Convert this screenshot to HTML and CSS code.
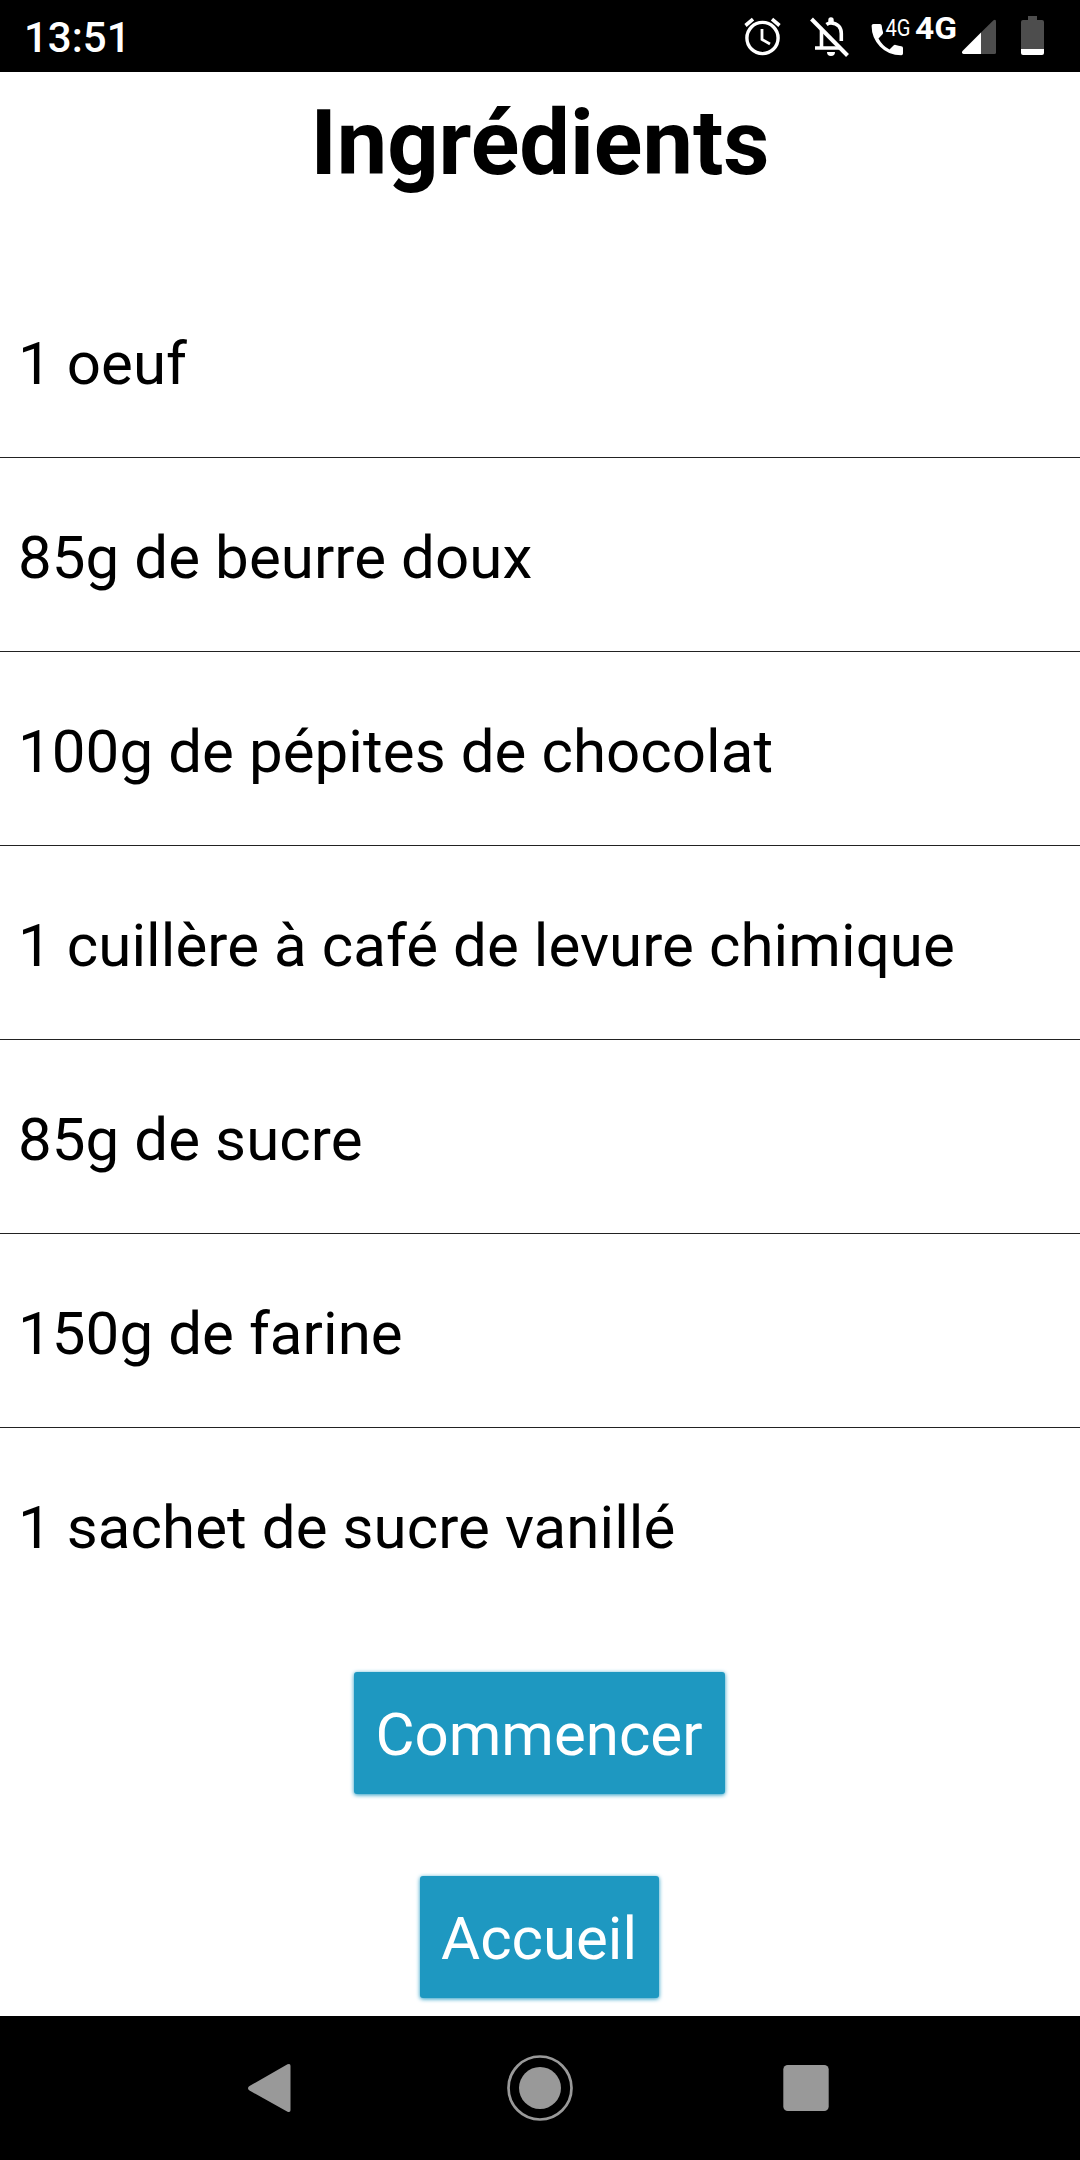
FILE: index.html
```
<!DOCTYPE html>
<html lang="fr">
<head>
    <meta charset="UTF-8">
    <meta name="viewport" content="width=device-width, initial-scale=1.0">
    <title>Ingrédients</title>
    <link rel="stylesheet" href="styles.css">
</head>
<body>
    <header class="status-bar">
        <span class="clock">13:51</span>
        <svg class="status-icons" viewBox="740 0 310 72">
            <!-- alarm -->
            <g fill="none" stroke="#fff">
                <circle cx="762.5" cy="38" r="15.6" stroke-width="3.4"/>
                <path d="M762 29v10.5l8 4.5" stroke-width="2.8"/>
                <path d="M745.5 25.5l7.5-6.3M779.5 25.500l-7.500-6.300" stroke-width="3.6"/>
            </g>
            <!-- bell off -->
            <g fill="none" stroke="#fff" stroke-width="3.6">
                <path d="M821.500 30v17.500M815 48h24M826.500 24.500q2-1.500 4.500-1.500c7 0 10.300 5 10.300 10.500v7.500"/>
                <path d="M811.500 19l36 36.500" stroke-width="4"/>
            </g>
            <path d="M828.300 23v-3a2.700 2.700 0 0 1 5.400 0v3zM827 52h8a4 4 0 0 1-8 0z" fill="#fff"/>
            <!-- phone -->
            <path d="M873.500 24h6.500q1.500 0 1.700 1.500 0.200 3.500 1.300 6.500 0.400 1.200-0.500 2.200l-4 4.200q3.800 7.200 11 11.200l4-4.200q1-0.900 2.200-0.500 3 1 5.600 1.300 1.700 0.200 1.700 1.800v5.500q0 1.700-1.700 1.700-13 0-21.400-8.800-8.300-8.700-8.300-20.700 0-1.700 1.900-1.700z" fill="#fff"/>
            <text class="call-type" x="885.500" y="36" textLength="25" lengthAdjust="spacingAndGlyphs">4G</text>
            <text class="data-type" x="915" y="39" textLength="42" lengthAdjust="spacingAndGlyphs">4G</text>
            <!-- signal -->
            <path d="M981 32.500l12.500-12.200q2.500-1.300 2.500 1.200v31q0 1.500-1.500 1.500h-13.500z" fill="#4d4d4d"/>
            <path d="M981 32.500v21.500h-17.500q-2.500-0.700-1-3z" fill="#fff"/>
            <!-- battery -->
            <path d="M1021 49v-27q0-2 2-2h5v-4h9v4h5q2 0 2 2v27z" fill="#4d4d4d"/>
            <path d="M1021 49h23v4q0 2-2 2h-19q-2 0-2-2z" fill="#fff"/>
        </svg>
    </header>

    <main>
        <h1>Ingrédients</h1>
        <ul class="ingredients">
            <li>1 oeuf</li>
            <li>85g de beurre doux</li>
            <li>100g de pépites de chocolat</li>
            <li>1 cuillère à café de levure chimique</li>
            <li>85g de sucre</li>
            <li>150g de farine</li>
            <li>1 sachet de sucre vanillé</li>
        </ul>
        <div class="actions">
            <button>Commencer</button>
            <button>Accueil</button>
        </div>
    </main>

    <nav class="nav-bar">
        <svg viewBox="0 0 72 72">
            <path d="M49.500 12.300L11.500 34q-3 2 0 4.500L49.500 59.700q3 1 3-1.500v-44.500q0-2.500-3-1.400z" fill="#999"/>
        </svg>
        <svg viewBox="0 0 72 72">
            <circle cx="36" cy="36" r="31.500" fill="none" stroke="#999" stroke-width="2.700"/>
            <circle cx="36" cy="36" r="21" fill="#999"/>
        </svg>
        <svg viewBox="0 0 72 72">
            <rect x="13.300" y="13" width="45.400" height="46" rx="4.500" fill="#999"/>
        </svg>
    </nav>
</body>
</html>
```
FILE: styles.css
```
body {
    font-family: Roboto, sans-serif;
    margin: 0;
    background-color: #fff;
    color: #000;
    height: 2160px;
    display: flex;
    flex-direction: column;
}

.status-bar {
    height: 72px;
    background-color: #000;
    color: #fff;
    display: flex;
    align-items: center;
    justify-content: space-between;
    padding: 0 30px 0 24px;
}

.clock {
    font-size: 42px;
    font-weight: 500;
    line-height: 72px;
    padding-top: 4px;
}

.status-icons {
    width: 310px;
    height: 72px;
}

.call-type {
    font-size: 24px;
    fill: #fff;
}

.data-type {
    font-size: 32px;
    font-weight: 700;
    fill: #fff;
}

main {
    flex: 1;
}

h1 {
    font-size: 90px;
    font-weight: 700;
    line-height: 120px;
    text-align: center;
    margin: 0;
    padding: 12px 0 60px;
}

.ingredients {
    list-style: none;
    margin: 0;
    padding: 0;
}

.ingredients li {
    box-sizing: border-box;
    height: 194px;
    padding: 63px 18px 0;
    font-size: 60px;
    line-height: 74px;
    letter-spacing: 0.08px;
    border-bottom: 1px solid #222;
}

.ingredients li:last-child {
    border-bottom: none;
}

.actions {
    display: flex;
    flex-direction: column;
    align-items: center;
    gap: 82px;
    padding-top: 50px;
    padding-right: 1px;
}

button {
    height: 122px;
    padding: 3px 22px 0 21px;
    font-family: inherit;
    font-size: 60px;
    color: #fff;
    background-color: #1e98c1;
    border: none;
    border-radius: 3px;
    box-shadow: 0 1px 4px #1e98c1;
}

.nav-bar {
    height: 144px;
    background-color: #000;
    display: flex;
    align-items: center;
    justify-content: center;
    gap: 194px;
}

.nav-bar svg {
    width: 72px;
    height: 72px;
}
```
